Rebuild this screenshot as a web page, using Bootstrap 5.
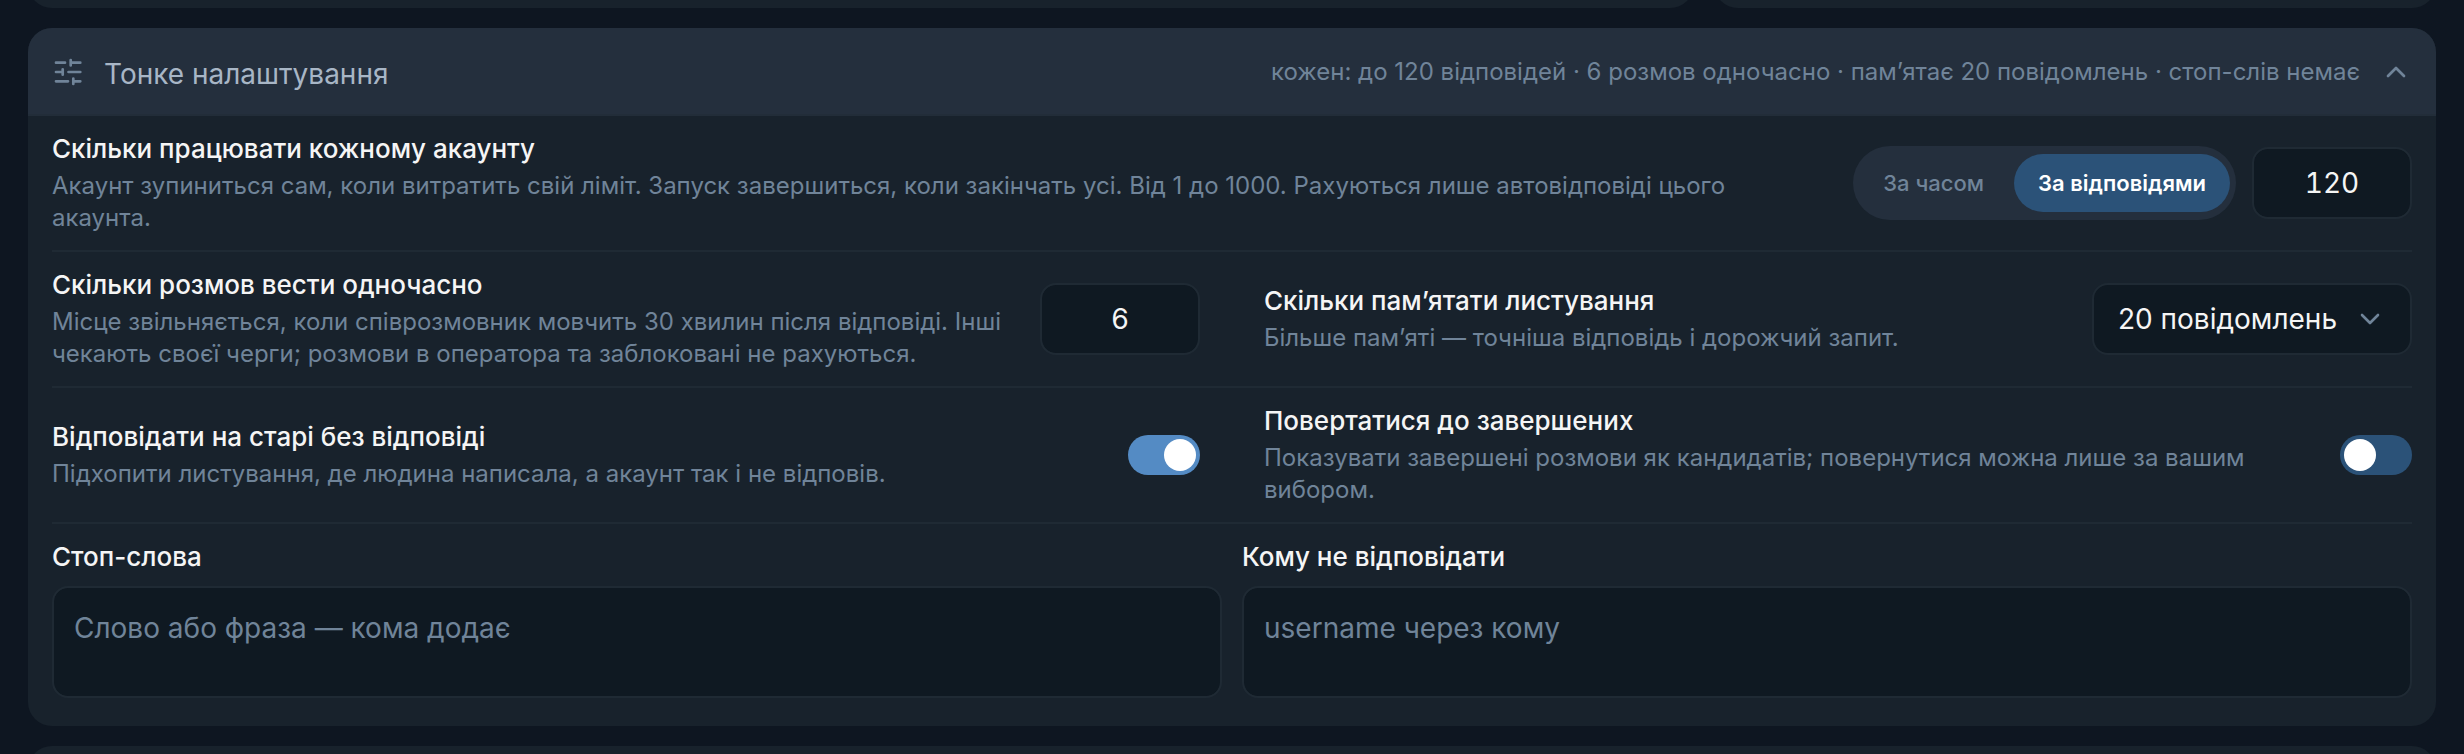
<!DOCTYPE html>
<html lang="uk" data-bs-theme="dark">
<head>
<meta charset="utf-8">
<meta name="viewport" content="width=device-width, initial-scale=1">
<title>Тонке налаштування</title>
<link href="https://cdn.jsdelivr.net/npm/bootstrap@5.3.0/dist/css/bootstrap.min.css" rel="stylesheet">
<style>
:root{--page:#0e1621;--panel:#18222c;--head:#242f3d;--field:#0f1922;--line:#1f2a34;--muted:#708499;--accent:#2b5278}
body{background:var(--page);color:#f5f5f5;font-family:Inter,"Liberation Sans",sans-serif;font-size:24px;line-height:32px}
.shell{padding:0 28px;gap:20px}
.panel{background:var(--panel);border-radius:24px;overflow:hidden}
.above{margin-top:-40px;gap:20px}
.above .panel{height:48px}
.wide{flex:1 1 0}.narrow{flex:0 0 30%}
.below{height:60px}
.panel-head{background:var(--head);border:0;border-bottom:2px solid #222d39;padding:0 24px;height:88px;color:var(--muted)}
.panel-name{color:#a8b6c6;font-size:28px;line-height:36px;padding:6px 0 0 20px}
.panel-summary{margin-right:20px;padding-top:2px}
.panel-body{padding:0 24px 28px}
.setting{border-bottom:2px solid var(--line);padding:16px 0;gap:64px;min-height:136px}
.item{flex:1 1 0;gap:32px;min-width:0}
.name{font-size:26px;line-height:34px;font-weight:500;margin:0 0 4px;display:block}
.hint{color:var(--muted);margin:0}
.field,.field:focus{background-color:var(--field);border:2px solid var(--line);border-radius:16px;color:#f5f5f5;font-size:28px;line-height:36px;box-shadow:none}
.field::placeholder{color:var(--muted);opacity:1}
.num{width:160px;height:72px;text-align:center;padding:0;font-variant-numeric:tabular-nums;appearance:textfield;-moz-appearance:textfield}
.num::-webkit-inner-spin-button{display:none}
.form-select.pick{width:320px;height:72px;padding:0 64px 0 24px;background-size:24px 24px;background-position:right 28px center;
 background-image:url("data:image/svg+xml,%3Csvg xmlns='http://www.w3.org/2000/svg' viewBox='0 0 24 24'%3E%3Cpath d='M4 8l8 8 8-8' fill='none' stroke='%23708499' stroke-width='2.6' stroke-linecap='round' stroke-linejoin='round'/%3E%3C/svg%3E")!important}
.segment{background:var(--head);border-radius:37px;padding:8px 6px;gap:6px}
.segment .btn{border:0;border-radius:29px;padding:0 24px;font-size:22px;line-height:58px;color:var(--muted);font-weight:500}
.segment .btn-check:checked+.btn{background:var(--accent);color:#fff;font-weight:600}
.toggle.form-check-input{width:72px;height:40px;margin:0;border:0;border-radius:20px;background-color:var(--accent);background-size:40px 40px;
 background-image:url("data:image/svg+xml,%3Csvg xmlns='http://www.w3.org/2000/svg' viewBox='0 0 40 40'%3E%3Ccircle cx='20' cy='20' r='16' fill='%23fff'/%3E%3C/svg%3E");background-position:left center;flex:none}
.toggle.form-check-input:checked{background-color:#548bc4;background-position:right center}
.lists{gap:20px;padding-top:16px}
.lists .name{margin-bottom:12px}
.area{height:112px;padding:22px 20px;resize:none}
</style>
</head>
<body>
<main class="shell vh-100 overflow-hidden d-flex flex-column">
  <div class="above d-flex flex-shrink-0">
    <div class="panel wide"></div>
    <div class="panel narrow"></div>
  </div>

  <section class="panel flex-shrink-0">
    <button class="panel-head w-100 d-flex align-items-center" type="button" data-bs-toggle="collapse" data-bs-target="#tuning" aria-expanded="true" aria-controls="tuning">
      <svg width="32" height="32" viewBox="0 0 32 32" fill="none" stroke="currentColor" stroke-width="2.7" stroke-linecap="round" aria-hidden="true">
        <path d="M4 7.7h9M19 7.7h9.300M18.700 5v5.400M4 17h6.700M10.700 14.300v5.400M16.500 17h11.800M4 26.300h12M21.300 26.300h7M21.300 23.600v5.400"/>
      </svg>
      <span class="panel-name me-auto">Тонке налаштування</span>
      <span class="panel-summary">кожен: до 120 відповідей · 6 розмов одночасно · пам’ятає 20 повідомлень · стоп-слів немає</span>
      <svg width="32" height="32" viewBox="0 0 32 32" fill="none" stroke="currentColor" stroke-width="2.7" stroke-linecap="round" stroke-linejoin="round" aria-hidden="true"><path d="M8 21l8-8 8 8"/></svg>
    </button>

    <div class="panel-body collapse show" id="tuning">
      <div class="setting d-flex">
        <div class="item d-flex align-items-center">
          <div class="flex-fill">
            <label class="name" for="limit">Скільки працювати кожному акаунту</label>
            <p class="hint">Акаунт зупиниться сам, коли витратить свій ліміт. Запуск завершиться, коли закінчать усі. Від 1 до 1000. Рахуються лише автовідповіді цього акаунта.</p>
          </div>
          <div class="d-flex align-items-center gap-3 flex-shrink-0">
            <div class="segment d-flex" role="group" aria-label="Скільки працювати">
              <input class="btn-check" type="radio" name="mode" id="byTime"><label class="btn" for="byTime">За часом</label>
              <input class="btn-check" type="radio" name="mode" id="byReplies" checked><label class="btn" for="byReplies">За відповідями</label>
            </div>
            <input class="form-control field num" type="number" id="limit" value="120" min="1" max="1000">
          </div>
        </div>
      </div>

      <div class="setting d-flex">
        <div class="item d-flex align-items-center">
          <div class="flex-fill">
            <label class="name" for="parallel">Скільки розмов вести одночасно</label>
            <p class="hint">Місце звільняється, коли співрозмовник мовчить 30 хвилин після відповіді. Інші чекають своєї черги; розмови в оператора та заблоковані не рахуються.</p>
          </div>
          <input class="form-control field num flex-shrink-0" type="number" id="parallel" value="6">
        </div>
        <div class="item d-flex align-items-center">
          <div class="flex-fill">
            <label class="name" for="memory">Скільки пам’ятати листування</label>
            <p class="hint">Більше пам’яті — точніша відповідь і дорожчий запит.</p>
          </div>
          <select class="form-select field pick flex-shrink-0" id="memory"><option>20 повідомлень</option></select>
        </div>
      </div>

      <div class="setting d-flex">
        <div class="item d-flex align-items-center">
          <div class="flex-fill">
            <label class="name" for="old">Відповідати на старі без відповіді</label>
            <p class="hint">Підхопити листування, де людина написала, а акаунт так і не відповів.</p>
          </div>
          <input class="form-check-input toggle" type="checkbox" role="switch" id="old" checked>
        </div>
        <div class="item d-flex align-items-center">
          <div class="flex-fill">
            <label class="name" for="finished">Повертатися до завершених</label>
            <p class="hint">Показувати завершені розмови як кандидатів; повернутися можна лише за вашим вибором.</p>
          </div>
          <input class="form-check-input toggle" type="checkbox" role="switch" id="finished">
        </div>
      </div>

      <div class="lists d-flex">
        <div class="flex-fill w-50">
          <label class="name" for="stop">Стоп-слова</label>
          <textarea class="form-control field area" id="stop" placeholder="Слово або фраза — кома додає"></textarea>
        </div>
        <div class="flex-fill w-50">
          <label class="name" for="skip">Кому не відповідати</label>
          <textarea class="form-control field area" id="skip" placeholder="username через кому"></textarea>
        </div>
      </div>
    </div>
  </section>

  <div class="panel below flex-shrink-0"></div>
</main>
<script src="https://cdn.jsdelivr.net/npm/bootstrap@5.3.0/dist/js/bootstrap.bundle.min.js"></script>
</body>
</html>
